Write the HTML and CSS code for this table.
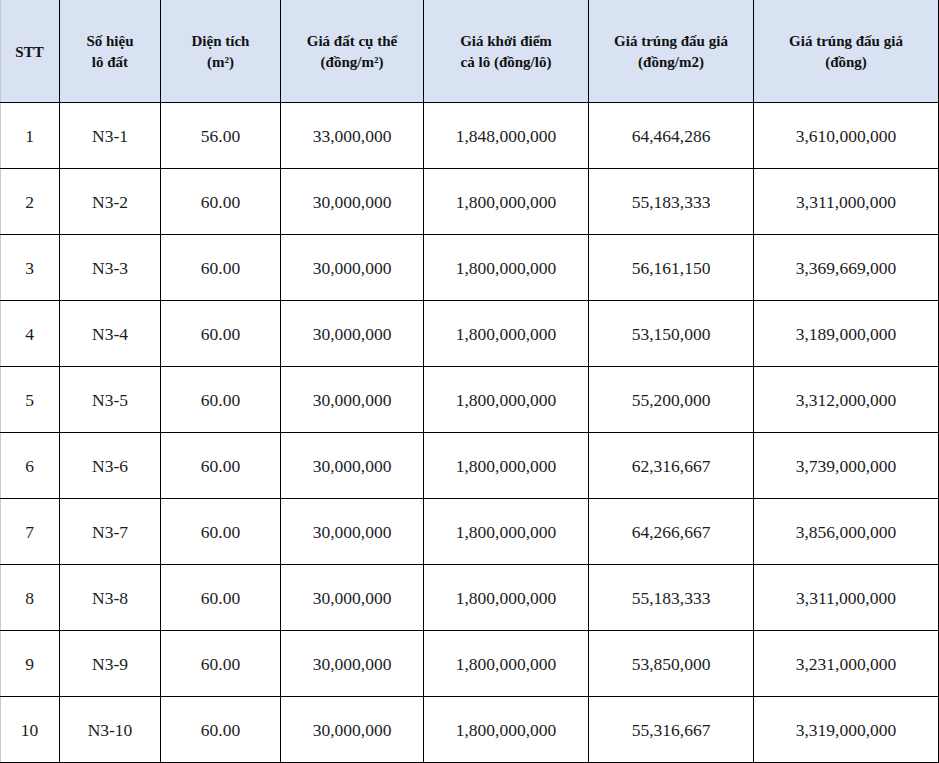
FILE: index.html
```html
<!DOCTYPE html>
<html lang="vi">
<head>
<meta charset="utf-8">
<title>Kết quả đấu giá</title>
<link rel="stylesheet" href="styles.css">
</head>
<body>
<div class="table" role="table">
  <div class="row head" role="row">
    <div class="cell first" role="columnheader">STT</div>
    <div class="cell" role="columnheader">Số hiệu<br>lô đất</div>
    <div class="cell" role="columnheader">Diện tích<br>(m²)</div>
    <div class="cell" role="columnheader">Giá đất cụ thể<br>(đồng/m²)</div>
    <div class="cell" role="columnheader">Giá khởi điểm<br>cả lô (đồng/lô)</div>
    <div class="cell" role="columnheader">Giá trúng đấu giá<br>(đồng/m2)</div>
    <div class="cell" role="columnheader">Giá trúng đấu giá<br>(đồng)</div>
  </div>
  <div class="row" role="row"><div class="cell first">1</div><div class="cell">N3-1</div><div class="cell">56.00</div><div class="cell">33,000,000</div><div class="cell">1,848,000,000</div><div class="cell">64,464,286</div><div class="cell">3,610,000,000</div></div>
  <div class="row" role="row"><div class="cell first">2</div><div class="cell">N3-2</div><div class="cell">60.00</div><div class="cell">30,000,000</div><div class="cell">1,800,000,000</div><div class="cell">55,183,333</div><div class="cell">3,311,000,000</div></div>
  <div class="row" role="row"><div class="cell first">3</div><div class="cell">N3-3</div><div class="cell">60.00</div><div class="cell">30,000,000</div><div class="cell">1,800,000,000</div><div class="cell">56,161,150</div><div class="cell">3,369,669,000</div></div>
  <div class="row" role="row"><div class="cell first">4</div><div class="cell">N3-4</div><div class="cell">60.00</div><div class="cell">30,000,000</div><div class="cell">1,800,000,000</div><div class="cell">53,150,000</div><div class="cell">3,189,000,000</div></div>
  <div class="row" role="row"><div class="cell first">5</div><div class="cell">N3-5</div><div class="cell">60.00</div><div class="cell">30,000,000</div><div class="cell">1,800,000,000</div><div class="cell">55,200,000</div><div class="cell">3,312,000,000</div></div>
  <div class="row" role="row"><div class="cell first">6</div><div class="cell">N3-6</div><div class="cell">60.00</div><div class="cell">30,000,000</div><div class="cell">1,800,000,000</div><div class="cell">62,316,667</div><div class="cell">3,739,000,000</div></div>
  <div class="row" role="row"><div class="cell first">7</div><div class="cell">N3-7</div><div class="cell">60.00</div><div class="cell">30,000,000</div><div class="cell">1,800,000,000</div><div class="cell">64,266,667</div><div class="cell">3,856,000,000</div></div>
  <div class="row" role="row"><div class="cell first">8</div><div class="cell">N3-8</div><div class="cell">60.00</div><div class="cell">30,000,000</div><div class="cell">1,800,000,000</div><div class="cell">55,183,333</div><div class="cell">3,311,000,000</div></div>
  <div class="row" role="row"><div class="cell first">9</div><div class="cell">N3-9</div><div class="cell">60.00</div><div class="cell">30,000,000</div><div class="cell">1,800,000,000</div><div class="cell">53,850,000</div><div class="cell">3,231,000,000</div></div>
  <div class="row" role="row"><div class="cell first">10</div><div class="cell">N3-10</div><div class="cell">60.00</div><div class="cell">30,000,000</div><div class="cell">1,800,000,000</div><div class="cell">55,316,667</div><div class="cell">3,319,000,000</div></div>
</div>
</body>
</html>
```

FILE: styles.css
```css
html, body {
  margin: 0;
  padding: 0;
  background: #ffffff;
}

.table {
  width: 939px;
  font-family: "Liberation Serif", "Times New Roman", serif;
  color: #1c1c1c;
}

.row {
  display: grid;
  grid-template-columns: 60px 101px 120px 143px 165px 165px 185px;
  height: 66px;
}

.cell {
  box-sizing: border-box;
  display: flex;
  align-items: center;
  justify-content: center;
  text-align: center;
  border-right: 1px solid #000;
  border-bottom: 1px solid #000;
  font-size: 17.5px;
  line-height: 21px;
  padding-top: 1px;
}

.cell.first {
  box-shadow: inset 1px 0 0 #c9c9c9;
}

.head {
  height: 103px;
  background: #d9e2f3;
}

.head .cell {
  font-weight: bold;
  font-size: 15px;
  line-height: 21px;
  color: #111;
  padding-top: 2px;
}
```
